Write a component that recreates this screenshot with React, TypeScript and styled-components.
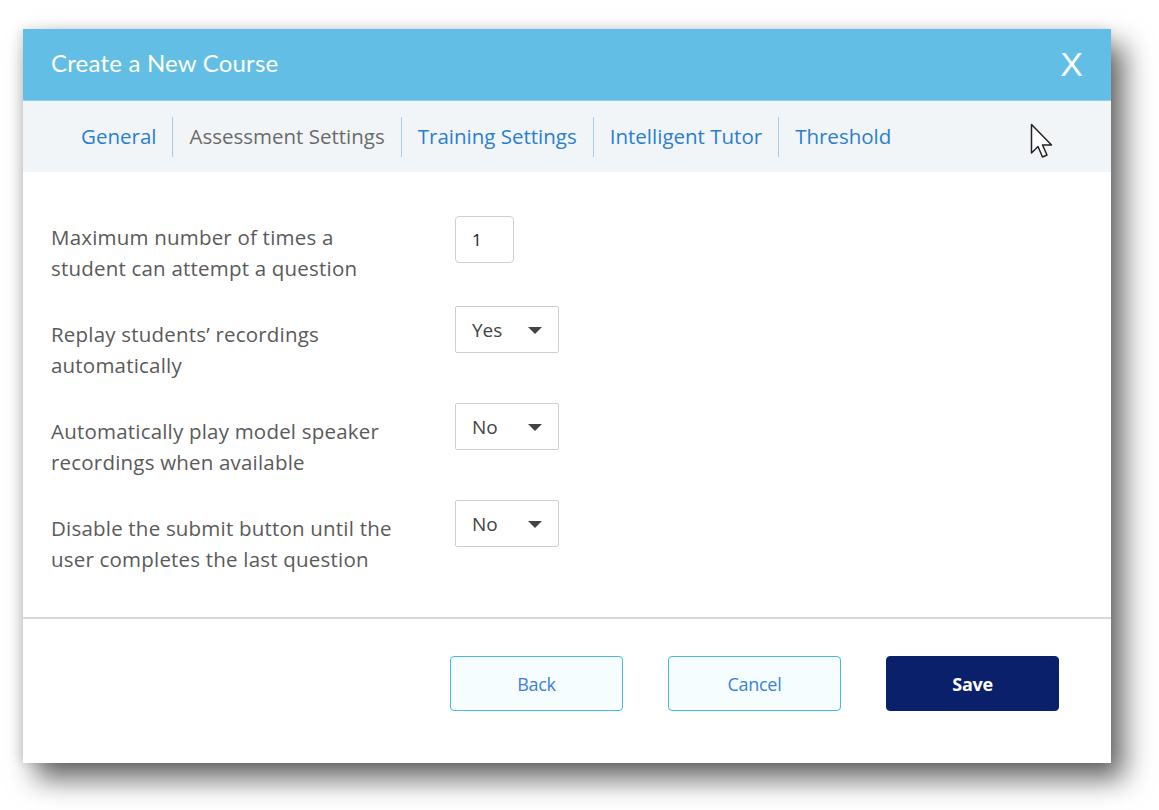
import React from "react";
import styled, { createGlobalStyle } from "styled-components";

const Global = createGlobalStyle`
  html, body { margin: 0; padding: 0; background: #ffffff; }
  body { width: 1159px; height: 810px; overflow: hidden; font-family: "Open Sans", "Liberation Sans", sans-serif; }
`;

const Page = styled.div`
  padding: 29px 48px 0 23px;
  position: relative;
`;

const Dialog = styled.div`
  width: 1088px;
  height: 734px;
  background: #ffffff;
  display: flex;
  flex-direction: column;
  box-shadow: 13px 16px 26px rgba(0, 0, 0, 0.6), -3px 0 10px rgba(0, 0, 0, 0.12);
  position: relative;
`;

const Header = styled.div`
  height: 71px;
  background: #62bee4;
  display: flex;
  align-items: center;
  justify-content: space-between;
  padding: 0 28px 0 28px;
`;

const Title = styled.div`
  color: #ffffff;
  font-family: "Lato", "Open Sans", sans-serif;
  font-size: 24px;
  letter-spacing: 0.2px;
  padding-bottom: 4px;
`;

const Close = styled.div`
  color: #ffffff;
  font-family: "Liberation Sans", sans-serif;
  font-size: 34px;
  line-height: 1;
  padding-bottom: 2px;
`;

const TabBar = styled.div`
  height: 71px;
  background: #f2f5f7;
  border-top: 1px solid #8fd0ee;
  display: flex;
  align-items: center;
  padding-left: 42px;
  position: relative;
`;

const Tab = styled.div<{ $active?: boolean; $first?: boolean }>`
  font-family: "Open Sans", sans-serif;
  font-size: 20.5px;
  color: ${(p) => (p.$active ? "#6a6a6a" : "#2a7ecf")};
  padding: 7px 16px 9px 16px;
  border-left: ${(p) => (p.$first ? "none" : "1px solid #a8cde8")};
  line-height: 24px;
  letter-spacing: 0px;
`;

const Body = styled.div`
  flex: 1;
  padding: 37px 0 0 28px;
  display: flex;
  flex-direction: column;
`;

const Row = styled.div`
  height: 97px;
  display: flex;
  align-items: flex-start;
`;

const Label = styled.div`
  width: 404px;
  font-family: "Open Sans", sans-serif;
  font-size: 20.5px;
  line-height: 31px;
  color: #5a5a5a;
  padding-top: 13px;
  letter-spacing: 0.2px;
`;

const NumBox = styled.div`
  margin-top: 7px;
  width: 59px;
  height: 47px;
  box-sizing: border-box;
  border: 1px solid #cfcfcf;
  border-radius: 4px;
  display: flex;
  align-items: center;
  padding-left: 16px;
  font-family: "Open Sans", sans-serif;
  font-size: 17px;
  color: #222;
`;

const Select = styled.div`
  width: 104px;
  height: 47px;
  box-sizing: border-box;
  border: 1px solid #cfcfcf;
  border-radius: 2px;
  display: flex;
  align-items: center;
  justify-content: space-between;
  padding: 0 16px 0 16px;
  font-family: "Open Sans", sans-serif;
  font-size: 19px;
  color: #444;
`;

const Caret = styled.span`
  width: 0;
  height: 0;
  border-left: 7px solid transparent;
  border-right: 7px solid transparent;
  border-top: 7px solid #444;
  margin-top: 1px;
`;

const Divider = styled.div`
  height: 2px;
  background: #d8d8d8;
`;

const Footer = styled.div`
  height: 144px;
  display: flex;
  justify-content: flex-end;
  align-items: flex-start;
  padding: 37px 52px 0 0;
  gap: 45px;
  box-sizing: border-box;
`;

const Button = styled.div<{ $primary?: boolean }>`
  width: 173px;
  height: 55px;
  box-sizing: border-box;
  border-radius: 4px;
  display: flex;
  align-items: center;
  justify-content: center;
  font-family: "Open Sans", sans-serif;
  font-size: 18px;
  letter-spacing: -0.3px;
  font-weight: ${(p) => (p.$primary ? 700 : 400)};
  color: ${(p) => (p.$primary ? "#ffffff" : "#3b7fe0")};
  background: ${(p) => (p.$primary ? "#0b206b" : "#f5fdfe")};
  border: 1px solid ${(p) => (p.$primary ? "#0b206b" : "#4ab6e2")};
`;

const Cursor = styled.svg`
  position: absolute;
  left: 1030px;
  top: 123px;
`;

const rows = [
  { label: ["Maximum number of times a", "student can attempt a question"], value: "1", kind: "num" },
  { label: ["Replay students\u2019 recordings", "automatically"], value: "Yes", kind: "sel" },
  { label: ["Automatically play model speaker", "recordings when available"], value: "No", kind: "sel" },
  { label: ["Disable the submit button until the", "user completes the last question"], value: "No", kind: "sel" },
];

export default function App() {
  return (
    <>
      <Global />
      <Page>
        <Dialog>
          <Header>
            <Title>Create a New Course</Title>
            <Close>X</Close>
          </Header>
          <TabBar>
            <Tab $first>General</Tab>
            <Tab $active>Assessment Settings</Tab>
            <Tab>Training Settings</Tab>
            <Tab>Intelligent Tutor</Tab>
            <Tab>Threshold</Tab>
          </TabBar>
          <Body>
            {rows.map((r, i) => (
              <Row key={i}>
                <Label>
                  {r.label[0]}
                  <br />
                  {r.label[1]}
                </Label>
                {r.kind === "num" ? (
                  <NumBox>{r.value}</NumBox>
                ) : (
                  <Select>
                    {r.value}
                    <Caret />
                  </Select>
                )}
              </Row>
            ))}
          </Body>
          <Divider />
          <Footer>
            <Button>Back</Button>
            <Button>Cancel</Button>
            <Button $primary>Save</Button>
          </Footer>
        </Dialog>
        <Cursor width="28" height="40" viewBox="0 0 28 40">
          <path
            d="M1.5 1.5 L1.5 30 L8 23.5 L12.5 34 L17 32 L12.5 22 L21.5 22 Z"
            fill="#ffffff"
            stroke="#222"
            strokeWidth="1.5"
            strokeLinejoin="round"
          />
        </Cursor>
      </Page>
    </>
  );
}
